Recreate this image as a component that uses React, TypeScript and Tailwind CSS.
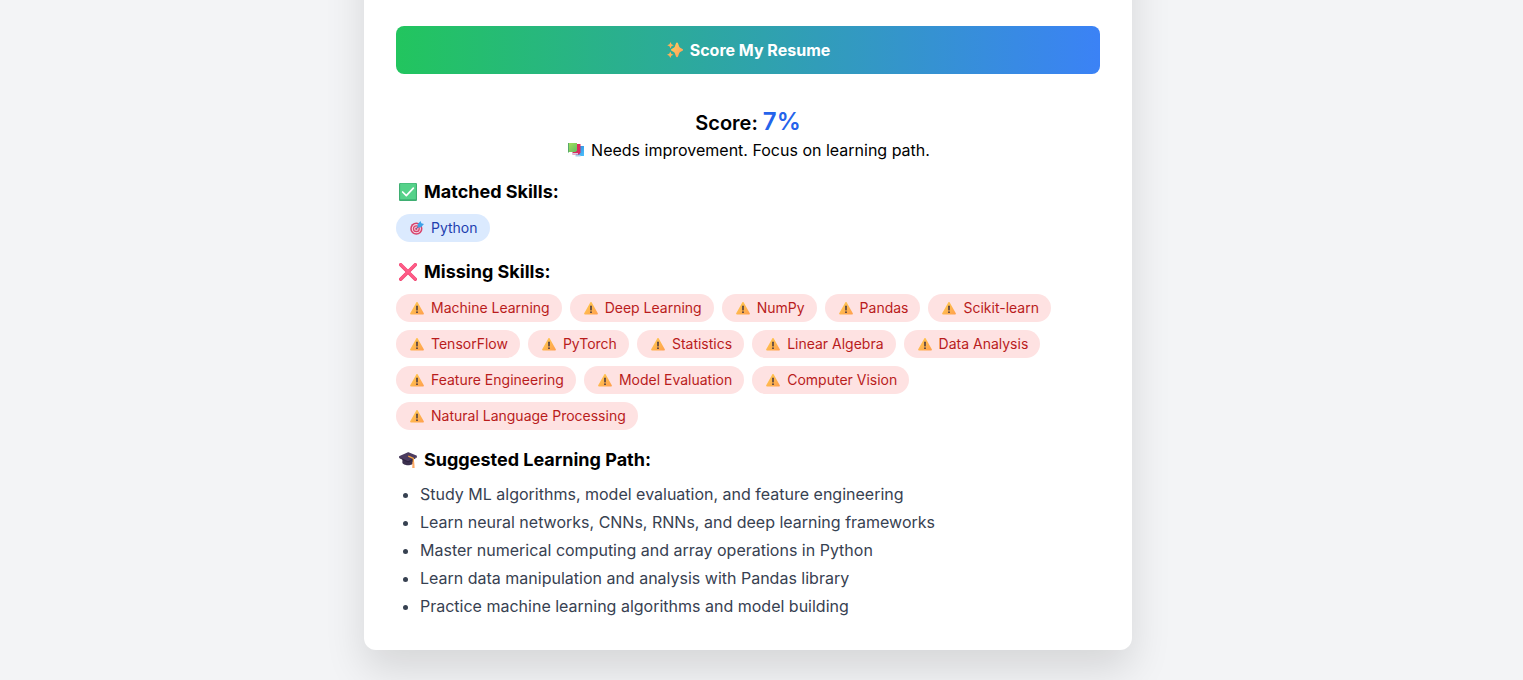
import type { ReactNode } from "react";

type IconProps = { className: string };

function Sparkles({ className }: IconProps) {
  return (
    <svg viewBox="0 0 32 32" className={className} aria-hidden="true">
      <defs>
        <linearGradient id="spark" x1="0" y1="0" x2="1" y2="1">
          <stop offset="0" stopColor="#ffd15c" />
          <stop offset="1" stopColor="#ff9a5c" />
        </linearGradient>
      </defs>
      <path fill="url(#spark)" d="M20 1c1 0 1.600.6 2 1.500l2.500 7c.4.9 1 1.500 1.900 1.900l4.600 2.400c1.500.8 1.500 2.900 0 3.700l-4.600 2.400c-.9.4-1.500 1-1.900 1.900l-2.500 7.200c-.7 1.800-3.300 1.800-4 0l-2.500-7.200c-.4-.9-1-1.500-1.900-1.900L9 17.500c-1.500-.8-1.500-2.900 0-3.700l4.600-2.400c.9-.4 1.500-1 1.900-1.900l2.500-7C18.400 1.600 19 1 20 1z" />
      <path fill="#ffb35c" d="M7 0l2 4.500L13.500 6.500 9 8.500 7 13 5 8.500.5 6.500 5 4.500zM6.500 19l2 4.700 4.500 2-4.500 2-2 4.300-2-4.300-4.500-2 4.500-2z" />
    </svg>
  );
}

function Books({ className }: IconProps) {
  return (
    <svg viewBox="0 0 32 32" className={className} aria-hidden="true">
      <defs>
        <linearGradient id="book-blue" x1="0" y1="0" x2="1" y2="1">
          <stop offset="0" stopColor="#2b7fd4" />
          <stop offset="1" stopColor="#4cc3ff" />
        </linearGradient>
        <linearGradient id="book-green" x1="0" y1="0" x2="1" y2="1">
          <stop offset="0" stopColor="#a5e05a" />
          <stop offset="1" stopColor="#62bd62" />
        </linearGradient>
      </defs>
      <path fill="url(#book-blue)" d="M22 8h10v20H16V11z" />
      <path fill="#a9cfe8" d="M15 26h10v3H15z" />
      <path fill="#d92b5e" d="M17 4h8v17l-3 4H9v-4z" />
      <path fill="#e0c4e0" d="M8 22h12v3H8z" />
      <path fill="url(#book-green)" d="M0 2h18v15l-3 3H0z" />
      <path fill="#58a96a" d="M0 2h2v19H0z" />
    </svg>
  );
}

function CheckMark({ className }: IconProps) {
  return (
    <svg viewBox="0 0 32 32" className={className} aria-hidden="true">
      <rect width="32" height="32" rx="2" fill="#3fae72" />
      <rect x="2" y="1" width="28" height="28" rx="1" fill="#56d28a" />
      <path d="M6.500 16l6.500 6.500L25.500 9" fill="none" stroke="#fff" strokeWidth="3" strokeLinecap="round" strokeLinejoin="round" />
    </svg>
  );
}

function CrossMark({ className }: IconProps) {
  return (
    <svg viewBox="0 0 32 32" className={className} aria-hidden="true">
      <path d="M3 3l26 26M29 3L3 29" fill="none" stroke="#f04470" strokeWidth="6" strokeLinecap="round" />
      <path d="M3 2.500l26 26M29 2.500L3 28.500" fill="none" stroke="#ff5c88" strokeWidth="4" strokeLinecap="round" />
    </svg>
  );
}

function GraduationCap({ className }: IconProps) {
  return (
    <svg viewBox="0 0 32 32" className={className} aria-hidden="true">
      <path fill="#3b2f4d" d="M6 12h20v9c0 2-5 4.500-10 4.500S6 23 6 21z" />
      <path fill="#4b3b60" d="M15 2.500c1-.4 2-.3 3 0l13 5.500c1.300.6 1.300 2 0 2.700L18 18c-1.300.7-2.700.7-4 0L1 11.500c-1.300-.7-1.300-2 0-2.600z" />
      <path fill="#2e2340" d="M.2 10.500L14 17.500c1.300.7 2.700.7 4 0l13.800-7.300c.2.700-.1 1.300-.8 1.700L18 19.500c-1.300.7-2.700.7-4 0L1 12.800c-.7-.5-1-1.500-.8-2.300z" />
      <path d="M16.500 9L25.500 13v10" fill="none" stroke="#f6a544" strokeWidth="2.200" strokeLinejoin="round" />
      <path fill="#ffab66" d="M24 19h3l.8 11h-4.300z" />
    </svg>
  );
}

function Target({ className }: IconProps) {
  return (
    <svg viewBox="0 0 32 32" className={className} aria-hidden="true">
      <circle cx="14.500" cy="17.500" r="14" fill="#d8436b" />
      <circle cx="14.500" cy="17.500" r="10.500" fill="#f3dbe9" />
      <circle cx="14.500" cy="17.500" r="8" fill="#d8436b" />
      <circle cx="14.500" cy="17.500" r="5" fill="#f3dbe9" />
      <circle cx="14.500" cy="17.500" r="2.800" fill="#d8436b" />
      <path d="M14.500 17.500l9-9" stroke="#3872a8" strokeWidth="2" />
      <path fill="#3ba2e8" d="M17 8l7-8 2 5 6 2-7 7-7 1z" />
    </svg>
  );
}

function Warning({ className }: IconProps) {
  return (
    <svg viewBox="0 0 32 32" className={className} aria-hidden="true">
      <defs>
        <linearGradient id="warn" x1="0" y1="0" x2="1" y2="1">
          <stop offset="0" stopColor="#ffcd50" />
          <stop offset="1" stopColor="#ff9f4d" />
        </linearGradient>
      </defs>
      <path fill="url(#warn)" d="M14.300 3.500c.8-1.500 2.600-1.500 3.400 0L31.500 28c.8 1.500-.2 3-2 3h-27c-1.800 0-2.800-1.500-2-3z" />
      <rect x="14.200" y="10" width="3.600" height="12" rx="1.800" fill="#4c3b42" />
      <circle cx="16" cy="25.500" r="2.100" fill="#4c3b42" />
    </svg>
  );
}

const missingSkills = [
  "Machine Learning",
  "Deep Learning",
  "NumPy",
  "Pandas",
  "Scikit-learn",
  "TensorFlow",
  "PyTorch",
  "Statistics",
  "Linear Algebra",
  "Data Analysis",
  "Feature Engineering",
  "Model Evaluation",
  "Computer Vision",
  "Natural Language Processing",
];

const learningPath = [
  "Study ML algorithms, model evaluation, and feature engineering",
  "Learn neural networks, CNNs, RNNs, and deep learning frameworks",
  "Master numerical computing and array operations in Python",
  "Learn data manipulation and analysis with Pandas library",
  "Practice machine learning algorithms and model building",
];

function SectionTitle({ icon, children }: { icon: ReactNode; children: ReactNode }) {
  return (
    <h3 className="mt-4 mb-2 flex items-center gap-[7px] pl-[3px] text-lg font-bold">
      {icon}
      {children}
    </h3>
  );
}

export default function App() {
  return (
    <div className="flex min-h-screen items-start justify-center overflow-hidden bg-[#f3f4f6] pr-[27px] pb-[30px] font-['Inter',sans-serif] text-black">
      <main className="-mt-20 w-full max-w-3xl rounded-xl bg-white px-8 pt-[106px] pb-8 shadow-[0_20px_40px_rgba(0,0,0,0.12)]">
        <button
          type="button"
          className="flex w-full items-center justify-center gap-[7px] rounded-lg bg-linear-to-r/srgb from-[#22c55e] to-[#3b82f6] py-3 font-bold text-white"
        >
          <Sparkles className="ml-px size-4" />
          Score My Resume
        </button>

        <section className="mt-8 text-center">
          <h2 className="text-xl font-semibold">
            Score: <span className="text-2xl text-[#2563eb]">7%</span>
          </h2>
          <p className="flex items-center justify-center gap-[7px]">
            <Books className="ml-0.5 size-4" />
            Needs improvement. Focus on learning path.
          </p>
        </section>

        <section>
          <SectionTitle icon={<CheckMark className="size-[18px]" />}>Matched Skills:</SectionTitle>
          <ul className="flex flex-wrap gap-2">
            <li className="flex items-center gap-[7px] rounded-full bg-[#dbeafe] py-1 pr-3 pl-[14px] text-sm text-[#1e40af]">
              <Target className="size-[14px]" />
              Python
            </li>
          </ul>
        </section>

        <section>
          <SectionTitle icon={<CrossMark className="size-[18px]" />}>Missing Skills:</SectionTitle>
          <ul className="flex flex-wrap gap-2">
            {missingSkills.map((skill) => (
              <li
                key={skill}
                className="flex items-center gap-[7px] rounded-full bg-[#fee2e2] py-1 pr-3 pl-[14px] text-sm text-[#b91c1c]"
              >
                <Warning className="size-[14px]" />
                {skill}
              </li>
            ))}
          </ul>
        </section>

        <section>
          <SectionTitle icon={<GraduationCap className="size-[18px]" />}>Suggested Learning Path:</SectionTitle>
          <ul className="list-disc space-y-1 pl-6 text-[#374151]">
            {learningPath.map((step) => (
              <li key={step}>{step}</li>
            ))}
          </ul>
        </section>
      </main>
    </div>
  );
}
